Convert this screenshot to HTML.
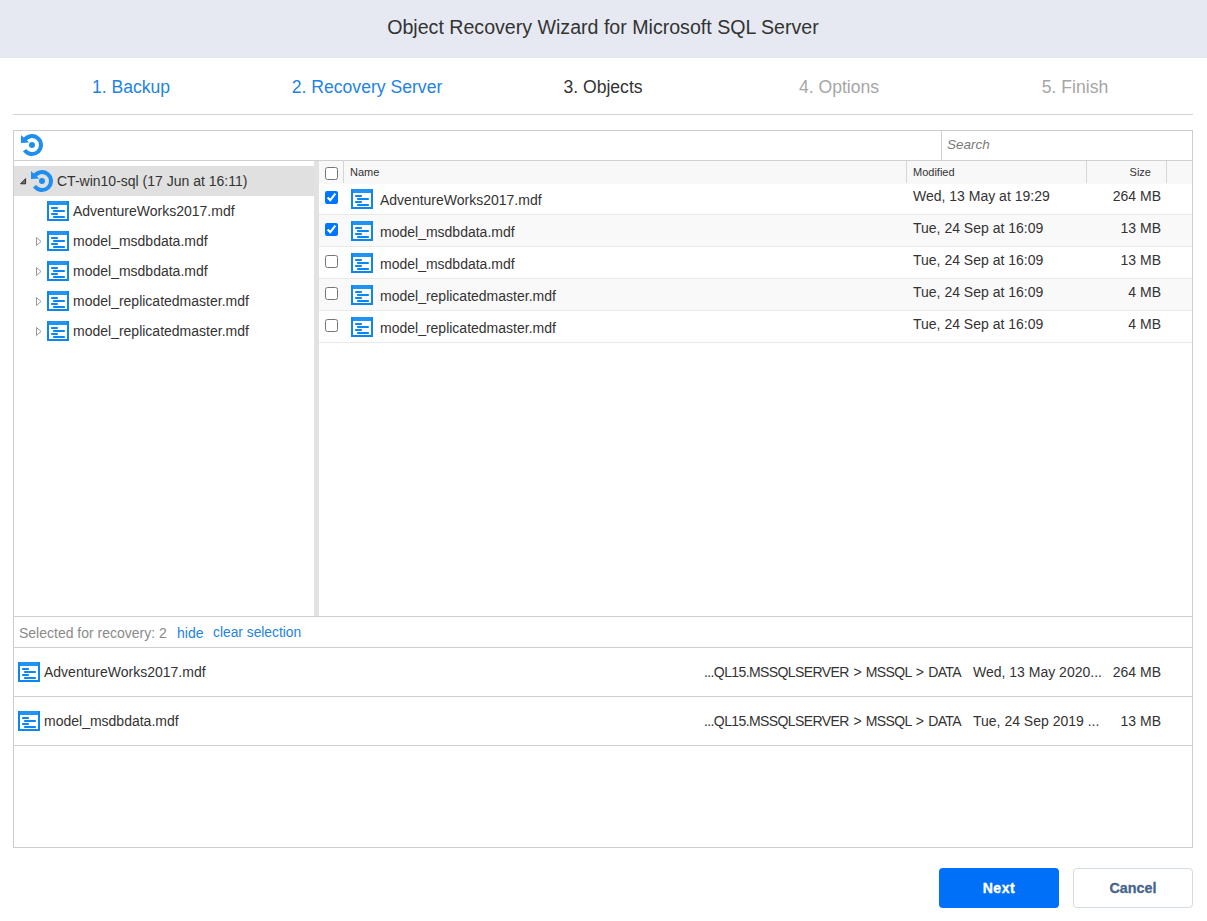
<!DOCTYPE html>
<html><head><meta charset="utf-8"><style>
html,body{margin:0;padding:0;width:1207px;height:921px;overflow:hidden;background:#fff;font-family:"Liberation Sans",sans-serif;}
body>div,body>svg,body>input{position:absolute;}
.t{white-space:nowrap;}
input[type=checkbox]{width:13px;height:13px;}
</style></head><body>
<div style="left:0px;top:0px;width:1207px;height:58px;background:#e6e9f1;"></div>
<div style="left:0px;top:57px;width:1207px;height:1px;background:#e1e5ec;"></div>
<div class="t" style="top:15.71px;font-size:19.6px;line-height:23px;color:#333;left:303px;width:600px;text-align:center;">Object Recovery Wizard for Microsoft SQL Server</div>
<div class="t" style="top:76.90px;font-size:17.6px;line-height:20px;color:#2383e2;left:-169px;width:600px;text-align:center;">1. Backup</div>
<div class="t" style="top:76.90px;font-size:17.6px;line-height:20px;color:#2383e2;left:67px;width:600px;text-align:center;">2. Recovery Server</div>
<div class="t" style="top:76.90px;font-size:17.6px;line-height:20px;color:#333;left:303px;width:600px;text-align:center;">3. Objects</div>
<div class="t" style="top:76.90px;font-size:17.6px;line-height:20px;color:#a6a6a6;left:539px;width:600px;text-align:center;">4. Options</div>
<div class="t" style="top:76.90px;font-size:17.6px;line-height:20px;color:#a6a6a6;left:775px;width:600px;text-align:center;">5. Finish</div>
<div style="left:13px;top:114px;width:1180px;height:1px;background:#d3d3d3;"></div>
<div style="left:13px;top:130px;width:1180px;height:718px;border:1px solid #cdcdcd;box-sizing:border-box;background:#fff;"></div>
<div style="left:14px;top:160px;width:1178px;height:1px;background:#d0d0d0;"></div>
<svg style="left:16px;top:130px" width="32" height="32" viewBox="0 0 32 32"><path d="M 8.6 20.2 A 9 9 0 1 0 8.2 10.5" fill="none" stroke="#1e8ff0" stroke-width="4"/><polygon points="5,5 5,13 13.2,12.4" fill="#1e8ff0"/><circle cx="16" cy="15" r="3" fill="#1e8ff0"/></svg>
<div style="left:941px;top:131px;width:1px;height:29px;background:#d0d0d0;"></div>
<div class="t" style="top:137.32px;font-size:13.5px;line-height:16px;color:#7a7a7a;font-style:italic;left:947px;">Search</div>
<div style="left:14px;top:166px;width:300px;height:30px;background:#e0e0e0;"></div>
<svg style="left:19px;top:177px" width="9" height="9" viewBox="0 0 9 9"><polygon points="1.6,6.8 6.6,1.6 6.6,6.8" fill="#707070" stroke="#222" stroke-width="0.9" stroke-linejoin="round"/></svg>
<svg style="left:26px;top:166px" width="32" height="32" viewBox="0 0 32 32"><path d="M 8.6 20.2 A 9 9 0 1 0 8.2 10.5" fill="none" stroke="#1e8ff0" stroke-width="4"/><polygon points="5,5 5,13 13.2,12.4" fill="#1e8ff0"/><circle cx="16" cy="15" r="3" fill="#1e8ff0"/></svg>
<div class="t" style="top:173.15px;font-size:14px;line-height:16px;color:#333;left:57px;">CT-win10-sql (17 Jun at 16:11)</div>
<svg style="left:47px;top:201px" width="22" height="20" viewBox="0 0 22 20"><rect x="0" y="0" width="22" height="4" fill="#2193f2"/><rect x="0" y="0" width="2" height="20" fill="#0c87f2"/><rect x="20" y="0" width="2" height="20" fill="#0c87f2"/><rect x="0" y="18" width="22" height="2" fill="#0c87f2"/><rect x="4" y="6" width="7" height="2" rx="0.8" fill="#0c87f2"/><rect x="6" y="9" width="12" height="2" rx="0.8" fill="#0c87f2"/><rect x="4" y="12" width="7" height="2" rx="0.8" fill="#0c87f2"/><rect x="6" y="15" width="12" height="2" rx="0.8" fill="#0c87f2"/></svg>
<div class="t" style="top:203.15px;font-size:14px;line-height:16px;color:#333;left:73px;">AdventureWorks2017.mdf</div>
<svg style="left:35px;top:236px" width="8" height="11" viewBox="0 0 8 11"><polygon points="1.5,1.5 1.5,9.5 6,5.5" fill="none" stroke="#9a9a9a" stroke-width="1"/></svg>
<svg style="left:47px;top:231px" width="22" height="20" viewBox="0 0 22 20"><rect x="0" y="0" width="22" height="4" fill="#2193f2"/><rect x="0" y="0" width="2" height="20" fill="#0c87f2"/><rect x="20" y="0" width="2" height="20" fill="#0c87f2"/><rect x="0" y="18" width="22" height="2" fill="#0c87f2"/><rect x="4" y="6" width="7" height="2" rx="0.8" fill="#0c87f2"/><rect x="6" y="9" width="12" height="2" rx="0.8" fill="#0c87f2"/><rect x="4" y="12" width="7" height="2" rx="0.8" fill="#0c87f2"/><rect x="6" y="15" width="12" height="2" rx="0.8" fill="#0c87f2"/></svg>
<div class="t" style="top:233.15px;font-size:14px;line-height:16px;color:#333;left:73px;">model_msdbdata.mdf</div>
<svg style="left:35px;top:266px" width="8" height="11" viewBox="0 0 8 11"><polygon points="1.5,1.5 1.5,9.5 6,5.5" fill="none" stroke="#9a9a9a" stroke-width="1"/></svg>
<svg style="left:47px;top:261px" width="22" height="20" viewBox="0 0 22 20"><rect x="0" y="0" width="22" height="4" fill="#2193f2"/><rect x="0" y="0" width="2" height="20" fill="#0c87f2"/><rect x="20" y="0" width="2" height="20" fill="#0c87f2"/><rect x="0" y="18" width="22" height="2" fill="#0c87f2"/><rect x="4" y="6" width="7" height="2" rx="0.8" fill="#0c87f2"/><rect x="6" y="9" width="12" height="2" rx="0.8" fill="#0c87f2"/><rect x="4" y="12" width="7" height="2" rx="0.8" fill="#0c87f2"/><rect x="6" y="15" width="12" height="2" rx="0.8" fill="#0c87f2"/></svg>
<div class="t" style="top:263.15px;font-size:14px;line-height:16px;color:#333;left:73px;">model_msdbdata.mdf</div>
<svg style="left:35px;top:296px" width="8" height="11" viewBox="0 0 8 11"><polygon points="1.5,1.5 1.5,9.5 6,5.5" fill="none" stroke="#9a9a9a" stroke-width="1"/></svg>
<svg style="left:47px;top:291px" width="22" height="20" viewBox="0 0 22 20"><rect x="0" y="0" width="22" height="4" fill="#2193f2"/><rect x="0" y="0" width="2" height="20" fill="#0c87f2"/><rect x="20" y="0" width="2" height="20" fill="#0c87f2"/><rect x="0" y="18" width="22" height="2" fill="#0c87f2"/><rect x="4" y="6" width="7" height="2" rx="0.8" fill="#0c87f2"/><rect x="6" y="9" width="12" height="2" rx="0.8" fill="#0c87f2"/><rect x="4" y="12" width="7" height="2" rx="0.8" fill="#0c87f2"/><rect x="6" y="15" width="12" height="2" rx="0.8" fill="#0c87f2"/></svg>
<div class="t" style="top:293.15px;font-size:14px;line-height:16px;color:#333;left:73px;">model_replicatedmaster.mdf</div>
<svg style="left:35px;top:326px" width="8" height="11" viewBox="0 0 8 11"><polygon points="1.5,1.5 1.5,9.5 6,5.5" fill="none" stroke="#9a9a9a" stroke-width="1"/></svg>
<svg style="left:47px;top:321px" width="22" height="20" viewBox="0 0 22 20"><rect x="0" y="0" width="22" height="4" fill="#2193f2"/><rect x="0" y="0" width="2" height="20" fill="#0c87f2"/><rect x="20" y="0" width="2" height="20" fill="#0c87f2"/><rect x="0" y="18" width="22" height="2" fill="#0c87f2"/><rect x="4" y="6" width="7" height="2" rx="0.8" fill="#0c87f2"/><rect x="6" y="9" width="12" height="2" rx="0.8" fill="#0c87f2"/><rect x="4" y="12" width="7" height="2" rx="0.8" fill="#0c87f2"/><rect x="6" y="15" width="12" height="2" rx="0.8" fill="#0c87f2"/></svg>
<div class="t" style="top:323.15px;font-size:14px;line-height:16px;color:#333;left:73px;">model_replicatedmaster.mdf</div>
<div style="left:314px;top:161px;width:5px;height:455px;background:#e2e2e2;"></div>
<div style="left:319px;top:161px;width:873px;height:23px;background:#f8f8f8;"></div>
<div style="left:343px;top:161px;width:1px;height:22px;background:#d6d6d6;"></div>
<div style="left:906px;top:161px;width:1px;height:22px;background:#d6d6d6;"></div>
<div style="left:1086px;top:161px;width:1px;height:22px;background:#d6d6d6;"></div>
<div style="left:1166px;top:161px;width:1px;height:22px;background:#d6d6d6;"></div>
<input type="checkbox" style="left:322px;top:164px;margin:3px 3px 3px 3px;">
<div class="t" style="top:165.69px;font-size:11px;line-height:13px;color:#333;left:350px;">Name</div>
<div class="t" style="top:165.69px;font-size:11px;line-height:13px;color:#333;left:913px;">Modified</div>
<div class="t" style="top:165.69px;font-size:11px;line-height:13px;color:#333;right:56px;">Size</div>
<div style="left:319px;top:214px;width:873px;height:1px;background:#e9e9e9;"></div>
<input type="checkbox" checked style="left:322px;top:188px;margin:3px 3px 3px 3px;">
<svg style="left:351px;top:189px" width="22" height="20" viewBox="0 0 22 20"><rect x="0" y="0" width="22" height="4" fill="#2193f2"/><rect x="0" y="0" width="2" height="20" fill="#0c87f2"/><rect x="20" y="0" width="2" height="20" fill="#0c87f2"/><rect x="0" y="18" width="22" height="2" fill="#0c87f2"/><rect x="4" y="6" width="7" height="2" rx="0.8" fill="#0c87f2"/><rect x="6" y="9" width="12" height="2" rx="0.8" fill="#0c87f2"/><rect x="4" y="12" width="7" height="2" rx="0.8" fill="#0c87f2"/><rect x="6" y="15" width="12" height="2" rx="0.8" fill="#0c87f2"/></svg>
<div class="t" style="top:192.15px;font-size:14px;line-height:16px;color:#333;left:380px;">AdventureWorks2017.mdf</div>
<div class="t" style="top:188.15px;font-size:14px;line-height:16px;color:#333;left:913px;">Wed, 13 May at 19:29</div>
<div class="t" style="top:188.15px;font-size:14px;line-height:16px;color:#333;right:46px;">264 MB</div>
<div style="left:319px;top:215px;width:873px;height:31px;background:#f9f9f9;"></div>
<div style="left:319px;top:246px;width:873px;height:1px;background:#e9e9e9;"></div>
<input type="checkbox" checked style="left:322px;top:220px;margin:3px 3px 3px 3px;">
<svg style="left:351px;top:221px" width="22" height="20" viewBox="0 0 22 20"><rect x="0" y="0" width="22" height="4" fill="#2193f2"/><rect x="0" y="0" width="2" height="20" fill="#0c87f2"/><rect x="20" y="0" width="2" height="20" fill="#0c87f2"/><rect x="0" y="18" width="22" height="2" fill="#0c87f2"/><rect x="4" y="6" width="7" height="2" rx="0.8" fill="#0c87f2"/><rect x="6" y="9" width="12" height="2" rx="0.8" fill="#0c87f2"/><rect x="4" y="12" width="7" height="2" rx="0.8" fill="#0c87f2"/><rect x="6" y="15" width="12" height="2" rx="0.8" fill="#0c87f2"/></svg>
<div class="t" style="top:224.15px;font-size:14px;line-height:16px;color:#333;left:380px;">model_msdbdata.mdf</div>
<div class="t" style="top:220.15px;font-size:14px;line-height:16px;color:#333;left:913px;">Tue, 24 Sep at 16:09</div>
<div class="t" style="top:220.15px;font-size:14px;line-height:16px;color:#333;right:46px;">13 MB</div>
<div style="left:319px;top:278px;width:873px;height:1px;background:#e9e9e9;"></div>
<input type="checkbox"  style="left:322px;top:252px;margin:3px 3px 3px 3px;">
<svg style="left:351px;top:253px" width="22" height="20" viewBox="0 0 22 20"><rect x="0" y="0" width="22" height="4" fill="#2193f2"/><rect x="0" y="0" width="2" height="20" fill="#0c87f2"/><rect x="20" y="0" width="2" height="20" fill="#0c87f2"/><rect x="0" y="18" width="22" height="2" fill="#0c87f2"/><rect x="4" y="6" width="7" height="2" rx="0.8" fill="#0c87f2"/><rect x="6" y="9" width="12" height="2" rx="0.8" fill="#0c87f2"/><rect x="4" y="12" width="7" height="2" rx="0.8" fill="#0c87f2"/><rect x="6" y="15" width="12" height="2" rx="0.8" fill="#0c87f2"/></svg>
<div class="t" style="top:256.15px;font-size:14px;line-height:16px;color:#333;left:380px;">model_msdbdata.mdf</div>
<div class="t" style="top:252.15px;font-size:14px;line-height:16px;color:#333;left:913px;">Tue, 24 Sep at 16:09</div>
<div class="t" style="top:252.15px;font-size:14px;line-height:16px;color:#333;right:46px;">13 MB</div>
<div style="left:319px;top:279px;width:873px;height:31px;background:#f9f9f9;"></div>
<div style="left:319px;top:310px;width:873px;height:1px;background:#e9e9e9;"></div>
<input type="checkbox"  style="left:322px;top:284px;margin:3px 3px 3px 3px;">
<svg style="left:351px;top:285px" width="22" height="20" viewBox="0 0 22 20"><rect x="0" y="0" width="22" height="4" fill="#2193f2"/><rect x="0" y="0" width="2" height="20" fill="#0c87f2"/><rect x="20" y="0" width="2" height="20" fill="#0c87f2"/><rect x="0" y="18" width="22" height="2" fill="#0c87f2"/><rect x="4" y="6" width="7" height="2" rx="0.8" fill="#0c87f2"/><rect x="6" y="9" width="12" height="2" rx="0.8" fill="#0c87f2"/><rect x="4" y="12" width="7" height="2" rx="0.8" fill="#0c87f2"/><rect x="6" y="15" width="12" height="2" rx="0.8" fill="#0c87f2"/></svg>
<div class="t" style="top:288.15px;font-size:14px;line-height:16px;color:#333;left:380px;">model_replicatedmaster.mdf</div>
<div class="t" style="top:284.15px;font-size:14px;line-height:16px;color:#333;left:913px;">Tue, 24 Sep at 16:09</div>
<div class="t" style="top:284.15px;font-size:14px;line-height:16px;color:#333;right:46px;">4 MB</div>
<div style="left:319px;top:342px;width:873px;height:1px;background:#e9e9e9;"></div>
<input type="checkbox"  style="left:322px;top:316px;margin:3px 3px 3px 3px;">
<svg style="left:351px;top:317px" width="22" height="20" viewBox="0 0 22 20"><rect x="0" y="0" width="22" height="4" fill="#2193f2"/><rect x="0" y="0" width="2" height="20" fill="#0c87f2"/><rect x="20" y="0" width="2" height="20" fill="#0c87f2"/><rect x="0" y="18" width="22" height="2" fill="#0c87f2"/><rect x="4" y="6" width="7" height="2" rx="0.8" fill="#0c87f2"/><rect x="6" y="9" width="12" height="2" rx="0.8" fill="#0c87f2"/><rect x="4" y="12" width="7" height="2" rx="0.8" fill="#0c87f2"/><rect x="6" y="15" width="12" height="2" rx="0.8" fill="#0c87f2"/></svg>
<div class="t" style="top:320.15px;font-size:14px;line-height:16px;color:#333;left:380px;">model_replicatedmaster.mdf</div>
<div class="t" style="top:316.15px;font-size:14px;line-height:16px;color:#333;left:913px;">Tue, 24 Sep at 16:09</div>
<div class="t" style="top:316.15px;font-size:14px;line-height:16px;color:#333;right:46px;">4 MB</div>
<div style="left:14px;top:616px;width:1178px;height:1px;background:#d0d0d0;"></div>
<div class="t" style="top:625.15px;font-size:14px;line-height:16px;color:#8a8a8a;left:19px;">Selected for recovery: 2</div>
<div class="t" style="top:625.15px;font-size:14px;line-height:16px;color:#2383e2;left:177px;">hide</div>
<div class="t" style="top:625.22px;font-size:13.8px;line-height:16px;color:#2383e2;left:213px;">clear selection</div>
<div style="left:14px;top:647px;width:1178px;height:1px;background:#d0d0d0;"></div>
<svg style="left:18px;top:662px" width="22" height="20" viewBox="0 0 22 20"><rect x="0" y="0" width="22" height="4" fill="#2193f2"/><rect x="0" y="0" width="2" height="20" fill="#0c87f2"/><rect x="20" y="0" width="2" height="20" fill="#0c87f2"/><rect x="0" y="18" width="22" height="2" fill="#0c87f2"/><rect x="4" y="6" width="7" height="2" rx="0.8" fill="#0c87f2"/><rect x="6" y="9" width="12" height="2" rx="0.8" fill="#0c87f2"/><rect x="4" y="12" width="7" height="2" rx="0.8" fill="#0c87f2"/><rect x="6" y="15" width="12" height="2" rx="0.8" fill="#0c87f2"/></svg>
<div class="t" style="top:664.15px;font-size:14px;line-height:16px;color:#333;left:44px;">AdventureWorks2017.mdf</div>
<div class="t" style="top:664.15px;font-size:14px;line-height:16px;color:#333;right:246px;letter-spacing:-0.6px;word-spacing:1.4px;">...QL15.MSSQLSERVER &gt; MSSQL &gt; DATA</div>
<div class="t" style="top:664.15px;font-size:14px;line-height:16px;color:#333;left:973px;">Wed, 13 May 2020...</div>
<div class="t" style="top:664.15px;font-size:14px;line-height:16px;color:#333;right:46px;">264 MB</div>
<div style="left:14px;top:696px;width:1178px;height:1px;background:#d0d0d0;"></div>
<svg style="left:18px;top:711px" width="22" height="20" viewBox="0 0 22 20"><rect x="0" y="0" width="22" height="4" fill="#2193f2"/><rect x="0" y="0" width="2" height="20" fill="#0c87f2"/><rect x="20" y="0" width="2" height="20" fill="#0c87f2"/><rect x="0" y="18" width="22" height="2" fill="#0c87f2"/><rect x="4" y="6" width="7" height="2" rx="0.8" fill="#0c87f2"/><rect x="6" y="9" width="12" height="2" rx="0.8" fill="#0c87f2"/><rect x="4" y="12" width="7" height="2" rx="0.8" fill="#0c87f2"/><rect x="6" y="15" width="12" height="2" rx="0.8" fill="#0c87f2"/></svg>
<div class="t" style="top:713.15px;font-size:14px;line-height:16px;color:#333;left:44px;">model_msdbdata.mdf</div>
<div class="t" style="top:713.15px;font-size:14px;line-height:16px;color:#333;right:246px;letter-spacing:-0.6px;word-spacing:1.4px;">...QL15.MSSQLSERVER &gt; MSSQL &gt; DATA</div>
<div class="t" style="top:713.15px;font-size:14px;line-height:16px;color:#333;left:973px;">Tue, 24 Sep 2019 ...</div>
<div class="t" style="top:713.15px;font-size:14px;line-height:16px;color:#333;right:46px;">13 MB</div>
<div style="left:14px;top:745px;width:1178px;height:1px;background:#d0d0d0;"></div>
<div style="left:939px;top:868px;width:120px;height:40px;background:#0070f8;border-radius:4px;"></div>
<div class="t" style="top:880.15px;font-size:14px;line-height:16px;color:#fff;font-weight:bold;left:699px;width:600px;text-align:center;letter-spacing:0.6px;-webkit-text-stroke:0.35px #fff;">Next</div>
<div style="left:1073px;top:868px;width:120px;height:40px;background:#fff;border:1px solid #d3dbe7;border-radius:4px;box-sizing:border-box;"></div>
<div class="t" style="top:880.05px;font-size:14.3px;line-height:16px;color:#45648e;font-weight:bold;left:833px;width:600px;text-align:center;-webkit-text-stroke:0.3px #45648e;">Cancel</div>
</body></html>
